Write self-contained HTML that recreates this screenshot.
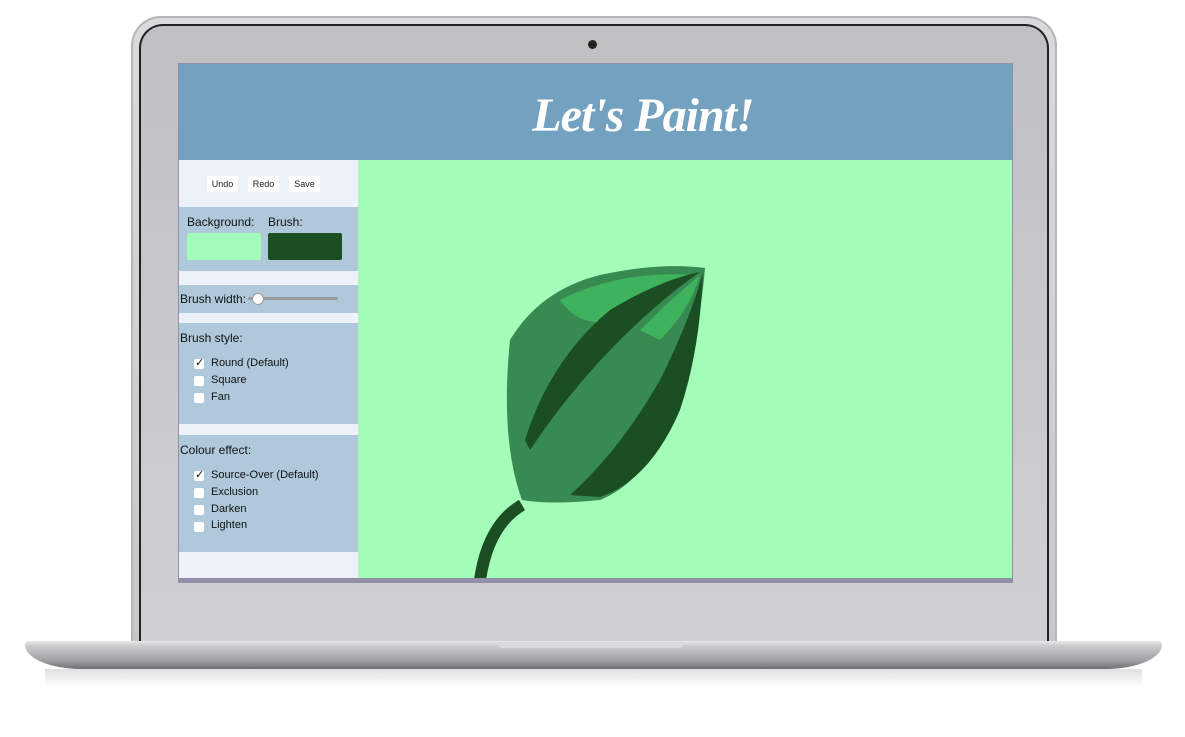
<!DOCTYPE html>
<html><head><style>
body{margin:0;width:1185px;height:737px;background:#fff;position:relative;overflow:hidden;font-family:"Liberation Sans",sans-serif}
.abs{position:absolute}
.lid{left:131px;top:16px;width:926px;height:628px;border-radius:30px 30px 0 0;background:linear-gradient(#d9dadc,#c6c7c9);box-shadow:inset 0 0 0 2px #b5b6b8}
.bezel{left:139px;top:24px;width:910px;height:618px;border-radius:24px 24px 0 0;background:linear-gradient(#bfc0c2,#cfd0d2);border:2px solid #222;border-bottom:none;box-sizing:border-box}
.screen{left:178px;top:63px;width:835px;height:520px;background:#9090a8}
.header{left:179px;top:64px;width:833px;height:96px;background:#73a2c1}
.title{top:88px;text-align:center;color:#fff;font:italic bold 48px "Liberation Serif",serif;letter-spacing:-1px}
.sb{left:179px;width:179px}
.w{background:#edf1f9}.b{background:#afc9db}
.btn{top:176px;height:16px;background:#fff;font-size:9px;line-height:16px;text-align:center;color:#222}
.t{font-size:12px;color:#111}
.cb{width:10px;height:10px;background:#fff;border-radius:2px}
.base{left:25px;top:641px;width:1137px;height:28px;background:linear-gradient(#e8e8e9 0,#c8c9cb 20%,#9fa0a3 70%,#6e6f72 100%);border-radius:4px 4px 60px 60px/4px 4px 26px 26px}
</style></head><body>
<div class="abs lid"></div>
<div class="abs bezel"></div>
<div class="abs" style="left:588px;top:40px;width:9px;height:9px;border-radius:50%;background:#222"></div>
<div class="abs screen"></div>
<div class="abs header"></div>
<div class="abs title" style="left:179px;width:928px">Let's Paint!</div>
<div class="abs sb w" style="top:160px;height:47px"></div>
<div class="abs btn" style="left:207px;width:31px">Undo</div>
<div class="abs btn" style="left:248px;width:31px">Redo</div>
<div class="abs btn" style="left:289px;width:31px">Save</div>
<div class="abs sb b" style="top:207px;height:64px"></div>
<div class="abs t" style="left:187px;top:215px">Background:</div>
<div class="abs t" style="left:268px;top:215px">Brush:</div>
<div class="abs" style="left:187px;top:233px;width:74px;height:27px;background:#a3fbb9;border-radius:2px"></div>
<div class="abs" style="left:268px;top:233px;width:74px;height:27px;background:#1b4e22;border-radius:2px"></div>
<div class="abs sb w" style="top:271px;height:14px"></div>
<div class="abs sb b" style="top:285px;height:28px"></div>
<div class="abs t" style="left:180px;top:292px">Brush width:</div>
<div class="abs" style="left:248px;top:297px;width:90px;height:3px;background:#999;border-radius:2px"></div>
<div class="abs" style="left:252px;top:293px;width:10px;height:10px;background:#fff;border:1px solid #999;border-radius:50%"></div>
<div class="abs sb w" style="top:313px;height:10px"></div>
<div class="abs sb b" style="top:323px;height:101px"></div>
<div class="abs t" style="left:180px;top:331px">Brush style:</div>
<div class="abs cb" style="left:194px;top:359px"></div><div class="abs t" style="left:195px;top:356px;font-size:11px">✓</div><div class="abs t" style="left:211px;top:357px;font-size:11px">Round (Default)</div>
<div class="abs cb" style="left:194px;top:376px"></div><div class="abs t" style="left:211px;top:374px;font-size:11px">Square</div>
<div class="abs cb" style="left:194px;top:393px"></div><div class="abs t" style="left:211px;top:391px;font-size:11px">Fan</div>
<div class="abs sb w" style="top:424px;height:11px"></div>
<div class="abs sb b" style="top:435px;height:117px"></div>
<div class="abs t" style="left:180px;top:443px">Colour effect:</div>
<div class="abs cb" style="left:194px;top:471px"></div><div class="abs t" style="left:195px;top:468px;font-size:11px">✓</div><div class="abs t" style="left:211px;top:469px;font-size:11px">Source-Over (Default)</div>
<div class="abs cb" style="left:194px;top:488px"></div><div class="abs t" style="left:211px;top:486px;font-size:11px">Exclusion</div>
<div class="abs cb" style="left:194px;top:505px"></div><div class="abs t" style="left:211px;top:503px;font-size:11px">Darken</div>
<div class="abs cb" style="left:194px;top:522px"></div><div class="abs t" style="left:211px;top:519px;font-size:11px">Lighten</div>
<div class="abs sb w" style="top:552px;height:26px"></div>
<div class="abs" style="left:358px;top:160px;width:654px;height:418px;background:#a3fdb8;overflow:hidden">
<svg width="654" height="418" viewBox="358 160 654 418">
<path d="M480 580 Q488 525 522 505" stroke="#1b4e22" stroke-width="12" fill="none"/>
<path d="M522 500 Q500 440 510 340 Q540 290 600 275 Q660 262 705 268 Q700 330 680 400 Q650 480 600 500 Q550 505 522 500Z" fill="#378a52"/>
<path d="M560 300 Q620 270 695 275 Q650 300 620 320 Q580 330 560 300Z" fill="#3fb25e"/>
<path d="M525 440 Q550 360 610 310 Q660 280 700 272 Q660 300 620 340 Q570 390 530 450Z" fill="#1b4e22"/>
<path d="M570 495 Q620 450 660 380 Q690 320 703 272 Q700 350 680 410 Q650 480 600 497Z" fill="#1b4e22"/>
<path d="M640 330 Q670 300 700 275 Q690 310 660 340Z" fill="#3fb25e"/>
</svg></div>
<div class="abs base"></div>
<div class="abs" style="left:497px;top:642px;width:188px;height:6px;background:#d9dadc;border-radius:0 0 6px 6px"></div>
<div class="abs" style="left:45px;top:669px;width:1097px;height:18px;background:linear-gradient(rgba(0,0,0,.12),rgba(0,0,0,0))"></div>
</body></html>
